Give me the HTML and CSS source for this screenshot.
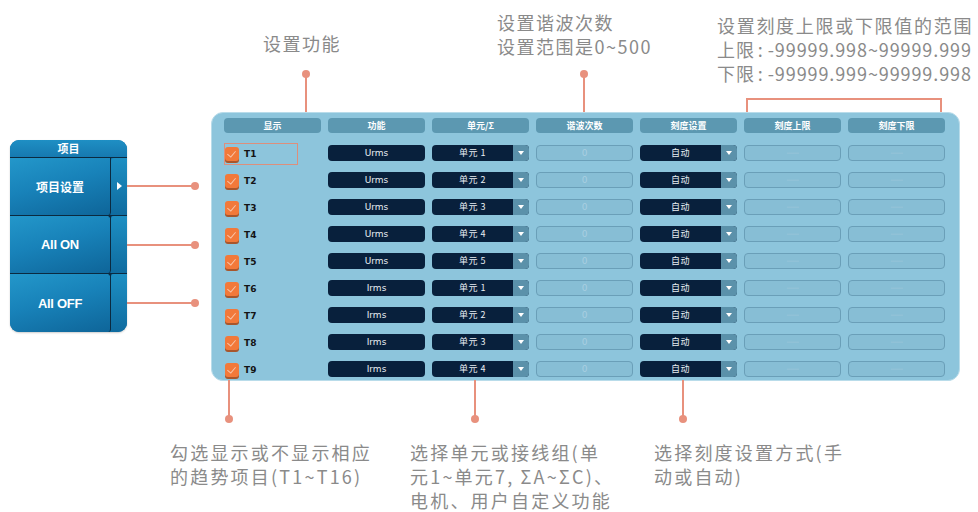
FILE: index.html
```html
<!DOCTYPE html>
<html lang="zh-CN">
<head>
  <meta charset="UTF-8">
  <meta name="viewport" content="width=device-width, initial-scale=1.0">
  <title>趋势项目设置</title>
  <link rel="stylesheet" href="styles.css">
</head>
<body>
  <div class="figure">
    <div class="stage">
      <div class="menu">
        <div class="menu-title">项目</div>
        <div class="menu-item">
          <div class="menu-main">项目设置</div>
          <div class="menu-side"><span class="arrow"></span></div>
        </div>
        <div class="menu-item">
          <div class="menu-main">All ON</div>
          <div class="menu-side"></div>
        </div>
        <div class="menu-item">
          <div class="menu-main">All OFF</div>
          <div class="menu-side"></div>
        </div>
      </div>

      <div class="panel">
        <div class="row head">
          <div class="th">显示</div>
          <div class="th">功能</div>
          <div class="th">单元/Σ</div>
          <div class="th">谐波次数</div>
          <div class="th">刻度设置</div>
          <div class="th">刻度上限</div>
          <div class="th">刻度下限</div>
        </div>

        <div class="row">
          <div class="show selected"><span class="check"></span>T1</div>
          <div class="field">Urms</div>
          <div class="select"><span>单元 1</span><i></i></div>
          <div class="box">0</div>
          <div class="select"><span>自动</span><i></i></div>
          <div class="box dash">------</div>
          <div class="box dash">------</div>
        </div>
        <div class="row">
          <div class="show"><span class="check"></span>T2</div>
          <div class="field">Urms</div>
          <div class="select"><span>单元 2</span><i></i></div>
          <div class="box">0</div>
          <div class="select"><span>自动</span><i></i></div>
          <div class="box dash">------</div>
          <div class="box dash">------</div>
        </div>
        <div class="row">
          <div class="show"><span class="check"></span>T3</div>
          <div class="field">Urms</div>
          <div class="select"><span>单元 3</span><i></i></div>
          <div class="box">0</div>
          <div class="select"><span>自动</span><i></i></div>
          <div class="box dash">------</div>
          <div class="box dash">------</div>
        </div>
        <div class="row">
          <div class="show"><span class="check"></span>T4</div>
          <div class="field">Urms</div>
          <div class="select"><span>单元 4</span><i></i></div>
          <div class="box">0</div>
          <div class="select"><span>自动</span><i></i></div>
          <div class="box dash">------</div>
          <div class="box dash">------</div>
        </div>
        <div class="row">
          <div class="show"><span class="check"></span>T5</div>
          <div class="field">Urms</div>
          <div class="select"><span>单元 5</span><i></i></div>
          <div class="box">0</div>
          <div class="select"><span>自动</span><i></i></div>
          <div class="box dash">------</div>
          <div class="box dash">------</div>
        </div>
        <div class="row">
          <div class="show"><span class="check"></span>T6</div>
          <div class="field">Irms</div>
          <div class="select"><span>单元 1</span><i></i></div>
          <div class="box">0</div>
          <div class="select"><span>自动</span><i></i></div>
          <div class="box dash">------</div>
          <div class="box dash">------</div>
        </div>
        <div class="row">
          <div class="show"><span class="check"></span>T7</div>
          <div class="field">Irms</div>
          <div class="select"><span>单元 2</span><i></i></div>
          <div class="box">0</div>
          <div class="select"><span>自动</span><i></i></div>
          <div class="box dash">------</div>
          <div class="box dash">------</div>
        </div>
        <div class="row">
          <div class="show"><span class="check"></span>T8</div>
          <div class="field">Irms</div>
          <div class="select"><span>单元 3</span><i></i></div>
          <div class="box">0</div>
          <div class="select"><span>自动</span><i></i></div>
          <div class="box dash">------</div>
          <div class="box dash">------</div>
        </div>
        <div class="row">
          <div class="show"><span class="check"></span>T9</div>
          <div class="field">Irms</div>
          <div class="select"><span>单元 4</span><i></i></div>
          <div class="box">0</div>
          <div class="select"><span>自动</span><i></i></div>
          <div class="box dash">------</div>
          <div class="box dash">------</div>
        </div>
      </div>
    </div>

    <!-- leader lines -->
    <svg class="leaders" width="978" height="512" viewBox="0 0 978 512">
      <g stroke="#e8917d" stroke-width="2" fill="none">
        <path d="M306 74 V112"/>
        <path d="M584 74 V112"/>
        <path d="M747 112 V99 H941 V112"/>
        <path d="M127 186 H195"/>
        <path d="M127 245 H195"/>
        <path d="M127 303 H195"/>
        <path d="M229 380 V419"/>
        <path d="M475 380 V419"/>
        <path d="M683 380 V419"/>
      </g>
      <g fill="#e8917d">
        <circle cx="306" cy="74" r="4"/>
        <circle cx="584" cy="74" r="4"/>
        <circle cx="195" cy="186" r="4"/>
        <circle cx="195" cy="245" r="4"/>
        <circle cx="195" cy="303" r="4"/>
        <circle cx="229" cy="419" r="4"/>
        <circle cx="475" cy="419" r="4"/>
        <circle cx="683" cy="419" r="4"/>
      </g>
      <g fill="#0b2a40">
        <circle cx="110" cy="216" r="1.5"/>
        <circle cx="110" cy="274" r="1.5"/>
      </g>
    </svg>

    <div class="note note-func">设置功能</div>
    <div class="note note-harm">设置谐波次数<br>设置范围是0~500</div>
    <div class="note note-scale"><span class="wide">设置刻度上限或下限值的范围</span><br>上限<span class="colon">:</span>-99999.998~99999.999<br>下限<span class="colon">:</span>-99999.999~99999.998</div>
    <div class="note note-show">勾选显示或不显示相应<br>的趋势项目(T1~T16)</div>
    <div class="note note-unit">选择单元或接线组(单<br>元1~单元7, ΣA~ΣC)、<br>电机、用户自定义功能</div>
    <div class="note note-mode">选择刻度设置方式(手<br>动或自动)</div>
  </div>
</body>
</html>
```

FILE: styles.css
```css
body {
  margin: 0;
  background: #fff;
  font-family: "Noto Sans CJK SC", "Noto Sans", sans-serif;
}
.figure {
  position: relative;
  width: 978px;
  height: 512px;
  overflow: hidden;
}
.stage {
  display: flex;
  align-items: flex-start;
  padding: 112px 0 0 10px;
}

/* left menu */
.menu {
  width: 117px;
  margin-top: 28px;
  border-radius: 9px;
  overflow: hidden;
  background: #0f6fa6;
  box-shadow: 0 1px 2px rgba(0, 0, 0, 0.2);
}
.menu-title {
  height: 17px;
  line-height: 16px;
  text-align: center;
  color: #fff;
  font-size: 11px;
  font-weight: bold;
  background: linear-gradient(180deg, #1f8fc4, #1679b0);
  border-bottom: 1px solid #0b2a40;
}
.menu-item {
  display: flex;
  height: 57px;
  border-bottom: 1px solid #0b2a40;
}
.menu-item:last-child {
  border-bottom: none;
  height: 58px;
}
.menu-main {
  width: 100px;
  display: flex;
  align-items: center;
  justify-content: center;
  color: #fff;
  font-size: 12px;
  font-weight: bold;
  background: linear-gradient(165deg, #2397ca 0%, #1882b9 45%, #0e6599 100%);
  border-right: 1px solid #0b2a40;
  border-radius: 0 0 3px 0;
}
.menu-item:nth-child(3) .menu-main,
.menu-item:nth-child(4) .menu-main {
  font-family: "Liberation Sans", Arial, sans-serif;
  font-size: 13px;
  letter-spacing: -0.3px;
}
.menu-side {
  flex: 1;
  display: flex;
  align-items: center;
  justify-content: center;
  background: linear-gradient(180deg, #1d8fc3, #0f6b9f);
  border-radius: 3px 0 0 3px;
}
.arrow {
  width: 0;
  height: 0;
  border-top: 4px solid transparent;
  border-bottom: 4px solid transparent;
  border-left: 5px solid #fff;
  margin-bottom: 2px;
}

/* main panel */
.panel {
  margin-left: 84px;
  width: 723px;
  height: 262px;
  padding: 5px 12px 0 12px;
  background: #8dc5dc;
  border: 1px solid #b9dcea;
  border-radius: 12px;
}
.row {
  display: grid;
  grid-template-columns: repeat(7, 97px);
  column-gap: 7px;
  height: 27px;
  align-items: center;
}
.row.head {
  height: 15px;
  margin-bottom: 6px;
}
.th {
  height: 15px;
  line-height: 15px;
  border-radius: 4px;
  background: #5c98b1;
  color: #fff;
  font-size: 9px;
  font-weight: bold;
  text-align: center;
}
.show {
  display: flex;
  align-items: center;
  height: 22px;
  width: 74px;
  box-sizing: border-box;
  border: 1px solid transparent;
  font-family: "DejaVu Sans", sans-serif;
  font-size: 9px;
  font-weight: bold;
  color: #141414;
  margin-top: 2px;
}
.show.selected {
  border-color: #de8f7c;
}
.check {
  position: relative;
  width: 14px;
  height: 14px;
  border-radius: 3px;
  background: #f2793a;
  box-shadow: 0 2px 0 #a8562c;
  margin-right: 5px;
}
.check::after {
  content: "";
  position: absolute;
  left: 4px;
  top: 2px;
  width: 4px;
  height: 7px;
  border-right: 1.5px solid rgba(255, 255, 255, 0.55);
  border-bottom: 1.5px solid rgba(255, 255, 255, 0.55);
  transform: rotate(40deg);
}
.field {
  height: 16px;
  line-height: 16px;
  border-radius: 4px;
  background: #08203c;
  color: #e8eef3;
  font-family: "DejaVu Sans", sans-serif;
  font-size: 9px;
  text-align: center;
}
.select {
  display: flex;
  height: 16px;
  border-radius: 4px;
  overflow: hidden;
  background: #08203c;
}
.select span {
  flex: 1;
  line-height: 16px;
  color: #e8eef3;
  font-size: 9px;
  letter-spacing: 0.5px;
  text-align: center;
}
.select i {
  width: 16px;
  background: #5b91aa;
  position: relative;
}
.select i::after {
  content: "";
  position: absolute;
  left: 5px;
  top: 6px;
  border-left: 3px solid transparent;
  border-right: 3px solid transparent;
  border-top: 4px solid #fff;
}
.box {
  height: 14px;
  line-height: 14px;
  border-radius: 4px;
  border: 1px solid #6a9fb8;
  background: #87bed5;
  color: #a9cfe1;
  font-family: "DejaVu Sans", sans-serif;
  font-size: 9px;
  text-align: center;
}
.box.dash {
  font-size: 7px;
  letter-spacing: -0.5px;
  color: #a5cadc;
}

/* callouts */
.leaders {
  position: absolute;
  left: 0;
  top: 0;
  pointer-events: none;
}
.note {
  position: absolute;
  color: #8a8a8a;
  font-size: 18px;
  line-height: 24px;
  letter-spacing: 1.5px;
  white-space: nowrap;
}
.note-func { left: 263px; top: 31px; }
.note-harm { left: 497px; top: 10px; }
.note-scale { left: 717px; top: 13px; letter-spacing: 0.9px; }
.note-scale .wide { letter-spacing: 1.7px; }
.note-scale .colon { margin: 0 4px 0 3px; }
.note-show,
.note-unit,
.note-mode {
  top: 440px;
  letter-spacing: 2.2px;
}
.note-unit .paren { margin-left: 4px; }
.note-show { left: 170px; }
.note-unit { left: 410px; }
.note-mode { left: 654px; }
```
